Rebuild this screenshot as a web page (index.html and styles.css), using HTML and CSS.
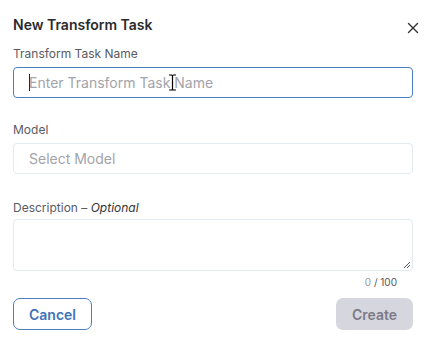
FILE: index.html
```html
<!DOCTYPE html>
<html>
<head>
<meta charset="utf-8">
<link rel="stylesheet" href="styles.css">
</head>
<body>
<div class="dialog">
  <div class="header">
    <h1 class="title">New Transform Task</h1>
    <button class="close" aria-label="Close">
      <svg width="12" height="12" viewBox="0 0 12 12"><path d="M1.5 1.5 L10.5 10.5 M10.5 1.5 L1.5 10.5" stroke="#333" stroke-width="1.4" fill="none" stroke-linecap="round"/></svg>
    </button>
  </div>
  <div class="field">
    <label class="label">Transform Task Name</label>
    <div class="input focused">
      <span class="caret"></span><span class="placeholder">Enter Transform Task Name</span>
      <svg class="ibeam" width="9" height="17" viewBox="0 0 9 17"><path d="M1 1 H3.5 Q4.5 1 4.5 2 V15 Q4.5 16 3.5 16 H1 M8 1 H5.5 Q4.5 1 4.5 2 M8 16 H5.5 Q4.5 16 4.5 15" stroke="#000" stroke-width="1.2" fill="none"/></svg>
    </div>
  </div>
  <div class="field gap-model">
    <label class="label">Model</label>
    <div class="input"><span class="placeholder">Select Model</span></div>
  </div>
  <div class="field gap-desc">
    <label class="label">Description <span class="dash">–</span> <em>Optional</em></label>
    <div class="textarea">
      <svg class="grip" width="8" height="8" viewBox="0 0 8 8"><path d="M7 1 L1 7 M7 4 L4 7" stroke="#555" stroke-width="1" fill="none"/></svg>
    </div>
    <div class="counter"><span class="count">0</span> / 100</div>
  </div>
  <div class="actions">
    <button class="btn cancel">Cancel</button>
    <button class="btn create">Create</button>
  </div>
</div>
</body>
</html>
```
FILE: styles.css
```css
* { box-sizing: border-box; }
html, body { margin: 0; background: #fff; }
body { font-family: Inter, "Noto Sans", sans-serif; color: #333; }
.dialog { width: 436px; padding: 16px 23px 0 13px; }
.header { display: flex; justify-content: space-between; align-items: center; height: 17px; }
.title { margin: 0; font-size: 14px; font-weight: 600; color: #2a2a2e; line-height: 17px; }
.close { border: 0; background: none; padding: 0; margin-top: 6px; margin-right: -6px; width: 12px; height: 12px; display: flex; }
.field { display: flex; flex-direction: column; }
.label { font-size: 12px; color: #5a5a63; line-height: 15px; margin-top: 13px; margin-bottom: 6px; }
.gap-model .label { margin-top: 24px; }
.gap-desc .label { margin-top: 26px; margin-bottom: 4px; }
.input { position: relative; height: 31px; border: 1px solid #e2ebee; border-radius: 4px; display: flex; align-items: center; padding-left: 15px; }
.input.focused { border-color: #4a7fc1; }
.placeholder { font-size: 14px; color: #a3a3aa; }
.caret { width: 1px; height: 17px; background: #222; margin-right: -1px; }
.ibeam { position: absolute; left: 154px; top: 6px; }
.dash { font-style: normal; }
.label em { color: #333; }
.textarea { position: relative; height: 52px; border: 1px solid #e2ebee; border-radius: 4px; }
.grip { position: absolute; right: 1px; bottom: 1px; }
.counter { align-self: flex-end; margin-right: 16px; font-size: 10px; color: #555; line-height: 12px; margin-top: 5px; }
.count { color: #999; }
.actions { display: flex; justify-content: space-between; margin-top: 10px; }
.btn { height: 32px; border-radius: 7px; font-family: inherit; font-size: 14px; font-weight: 600; padding: 0; }
.cancel { width: 79px; background: #fff; border: 1px solid #4a7fc1; color: #3f73b8; }
.create { width: 77px; background: #d6d6de; border: 0; color: #7b7b88; }
```
